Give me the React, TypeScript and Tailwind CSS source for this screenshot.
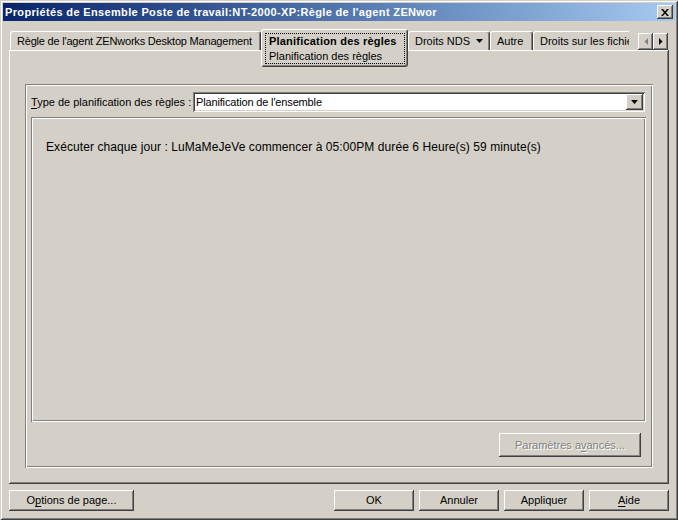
import React from "react";

const raised =
  "shadow-[inset_-1px_-1px_#404040,inset_1px_1px_#ffffff,inset_-2px_-2px_#808080,inset_2px_2px_#d4d0c8]";
const sunken =
  "shadow-[inset_1px_1px_#808080,inset_-1px_-1px_#ffffff,inset_2px_2px_#404040,inset_-2px_-2px_#d4d0c8]";
const etched =
  "shadow-[inset_1px_1px_#808080,inset_-1px_-1px_#ffffff,inset_2px_2px_#ffffff,inset_-2px_-2px_#808080]";
const tabEdge =
  "border-l border-t border-white border-r border-r-[#404040] rounded-tl-[3px] rounded-tr-[3px] shadow-[inset_-1px_0_#808080]";

function Mn({ children }: { children: React.ReactNode }) {
  return <span className="underline decoration-1 underline-offset-[2px]">{children}</span>;
}

function Btn({ w, children }: { w: string; children: React.ReactNode }) {
  return <div className={`${w} h-[21px] ${raised} flex items-center justify-center text-black`}>{children}</div>;
}

export default function App() {
  return (
    <div
      className={`w-[678px] h-[520px] bg-[#d4d0c8] p-[3px] flex flex-col overflow-hidden text-[11px] leading-[13px] text-black font-['Liberation_Sans',Arial,sans-serif] shadow-[inset_1px_1px_#d4d0c8,inset_-1px_-1px_#404040,inset_2px_2px_#ffffff,inset_-2px_-2px_#808080]`}
    >
      {/* Title bar */}
      <div className="h-[18px] flex items-center bg-linear-to-r from-[#0a246a] to-[#a6caf0] pl-[2px] pr-[2px]">
        <div className="flex-1 overflow-hidden whitespace-nowrap font-bold text-white text-[11px] tracking-[0.35px]">
          Propriétés de Ensemble Poste de travail:NT-2000-XP:Règle de l'agent ZENwor
        </div>
        <div className={`w-[16px] h-[14px] bg-[#d4d0c8] ${raised} flex items-center justify-center`}>
          <svg width="8" height="7" viewBox="0 0 8 7">
            <path d="M0 0h2l2 2.4L6 0h2L5 3.5 8 7H6L4 4.6 2 7H0l3-3.5z" fill="#000" />
          </svg>
        </div>
      </div>

      {/* Body */}
      <div className="flex-1 flex flex-col px-[6px]">
        {/* Tabs */}
        <div className="mt-[8px] h-[21px] flex items-start relative z-10">
          <div className={`ml-[1px] mt-[2px] h-[19px] w-[251px] ${tabEdge} pl-[6px] flex items-center whitespace-nowrap tracking-[-0.2px]`}>
            Règle de l'agent ZENworks Desktop Management
          </div>
          <div className={`w-[147px] h-[38px] bg-[#d4d0c8] border-l border-t border-white border-r border-r-[#404040] border-b border-b-[#404040] rounded-[3px] shadow-[inset_-1px_-1px_#808080] pt-[3px] pl-[3px] pr-[2px] pb-[2px]`}>
            <div className="h-full border border-dotted border-black pl-[3px] pt-[1px] flex flex-col gap-[2px] whitespace-nowrap">
              <div className="font-bold tracking-[0.2px]">Planification des règles</div>
              <div>Planification des règles</div>
            </div>
          </div>
          <div className={`mt-[2px] h-[19px] w-[82px] ${tabEdge} pl-[6px] flex items-center whitespace-nowrap`}>
            Droits NDS
            <svg width="8" height="4" viewBox="0 0 8 4" className="ml-[6px]">
              <path d="M0 0h7L3.5 4z" fill="#000" />
            </svg>
          </div>
          <div className={`mt-[2px] h-[19px] w-[43px] ${tabEdge} pl-[6px] flex items-center whitespace-nowrap`}>
            Autre
          </div>
          <div className="mt-[2px] h-[19px] w-[96px] border-l border-t border-white rounded-tl-[3px] pl-[6px] flex items-center whitespace-nowrap overflow-hidden">
            Droits sur les fichiers
          </div>
          <div className="ml-auto mr-[1px] mt-[4px] flex">
            <div className={`w-[15px] h-[17px] ${raised} flex items-center justify-center`}>
              <svg width="4" height="7" viewBox="0 0 4 7">
                <path d="M4 0v7L0.5 3.5z" fill="#808080" />
              </svg>
            </div>
            <div className={`w-[15px] h-[17px] ${raised} flex items-center justify-center`}>
              <svg width="4" height="7" viewBox="0 0 4 7">
                <path d="M0 0v7L3.5 3.5z" fill="#000" />
              </svg>
            </div>
          </div>
        </div>

        {/* Tab panel */}
        <div className={`h-[434px] ${raised} pt-[34px] px-[16px] pb-[16px] flex`}>
          <div className={`flex-1 flex flex-col ${etched} pt-[8px] pl-[6px] pr-[7px] pb-[11px]`}>
            <div className="h-[20px] flex items-center">
              <div className="w-[162px] whitespace-nowrap">
                <Mn>T</Mn>ype de planification des règles :
              </div>
              <div className={`flex-1 mr-[1px] h-[20px] bg-white ${sunken} p-[2px] flex items-center`}>
                <div className="flex-1 pl-[1px] whitespace-nowrap tracking-[-0.15px]">Planification de l'ensemble</div>
                <div className={`w-[17px] h-[16px] bg-[#d4d0c8] ${raised} flex items-center justify-center`}>
                  <svg width="7" height="4" viewBox="0 0 7 4">
                    <path d="M0 0h7L3.5 4z" fill="#000" />
                  </svg>
                </div>
              </div>
            </div>
            <div className={`mt-[5px] flex-1 ${etched} pt-[23px] pl-[15px] whitespace-nowrap text-[12px] leading-[14px] tracking-[0.08px]`}>
              Exécuter chaque jour : LuMaMeJeVe commencer à 05:00PM durée 6 Heure(s) 59 minute(s)
            </div>
            <div className="mt-[11px] self-end mr-[5px]">
              <div
                className={`w-[142px] h-[24px] ${raised} flex items-center justify-center text-[#808080] [text-shadow:1px_1px_0_#ffffff]`}
              >
                <span>
                  Paramètres a<Mn>v</Mn>ancés...
                </span>
              </div>
            </div>
          </div>
        </div>

        {/* Bottom buttons */}
        <div className="mt-[6px] flex">
          <Btn w="w-[125px]">
            <span>
              O<Mn>p</Mn>tions de page...
            </span>
          </Btn>
          <div className="ml-auto flex gap-[5px]">
            <Btn w="w-[80px]">OK</Btn>
            <Btn w="w-[80px]">Annuler</Btn>
            <Btn w="w-[80px]">Appliquer</Btn>
            <Btn w="w-[80px]">
              <span>
                <Mn>A</Mn>ide
              </span>
            </Btn>
          </div>
        </div>
      </div>
    </div>
  );
}
